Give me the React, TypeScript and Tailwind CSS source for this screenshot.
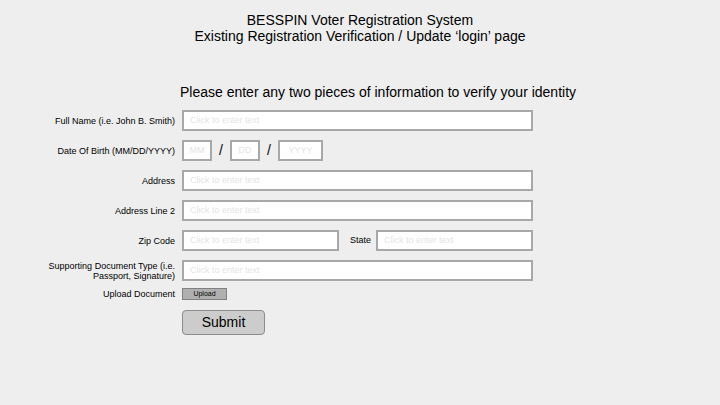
import React from "react";

const font = { fontFamily: '"Liberation Sans", Arial, sans-serif' };

function TextBox({ width, placeholder = "Click to enter text", center = false }: { width: string; placeholder?: string; center?: boolean }) {
  return (
    <div
      className={`${width} h-[21px] bg-white border-2 border-[#a8a8a8] flex items-center text-[9px] text-[#e4e4e4] ${center ? "justify-center" : "pl-[6px]"}`}
    >
      {placeholder}
    </div>
  );
}

function Row({ label, children, className = "" }: { label: React.ReactNode; children: React.ReactNode; className?: string }) {
  return (
    <div className={`flex items-center ${className}`}>
      <div className="w-[175px] text-right text-[9px] leading-[10px] text-black">{label}</div>
      <div className="ml-[7px] flex items-center">{children}</div>
    </div>
  );
}

export default function App() {
  return (
    <div className="w-[720px] h-[405px] bg-[#eeeeee] overflow-hidden" style={font}>
      <div className="pt-[12px] text-center text-[14px] leading-[16px] text-black">
        <div>BESSPIN Voter Registration System</div>
        <div>Existing Registration Verification / Update ‘login’ page</div>
      </div>

      <div className="mt-[39px] text-center text-[14px] leading-[18px] text-black pl-[36px]">
        Please enter any two pieces of information to verify your identity
      </div>

      <div className="mt-[9px] flex flex-col">
        <Row label="Full Name (i.e. John B. Smith)">
          <TextBox width="w-[351px]" />
        </Row>

        <Row label="Date Of Birth (MM/DD/YYYY)" className="mt-[9px]">
          <TextBox width="w-[30px]" placeholder="MM" center />
          <span className="w-[18px] text-center text-[14px] text-black">/</span>
          <TextBox width="w-[30px]" placeholder="DD" center />
          <span className="w-[18px] text-center text-[14px] text-black">/</span>
          <TextBox width="w-[45px]" placeholder="YYYY" center />
        </Row>

        <Row label="Address" className="mt-[9px]">
          <TextBox width="w-[351px]" />
        </Row>

        <Row label="Address Line 2" className="mt-[9px]">
          <TextBox width="w-[351px]" />
        </Row>

        <Row label="Zip Code" className="mt-[9px]">
          <TextBox width="w-[157px]" />
          <span className="ml-[11px] w-[26px] text-[9px] text-black">State</span>
          <TextBox width="w-[157px]" />
        </Row>

        <Row
          label={
            <>
              Supporting Document Type (i.e.
              <br />
              Passport, Signature)
            </>
          }
          className="mt-[9px]"
        >
          <TextBox width="w-[351px]" />
        </Row>

        <Row label="Upload Document" className="mt-[7px]">
          <button className="w-[45px] h-[12px] bg-[#b0b0b0] border border-[#808080] text-[7px] leading-[10px] text-black">
            Upload
          </button>
        </Row>

        <div className="mt-[10px] ml-[182px]">
          <button className="w-[83px] h-[25px] bg-[#cccccc] border border-[#8c8c8c] rounded-[4px] text-[14px] text-black">
            Submit
          </button>
        </div>
      </div>
    </div>
  );
}
